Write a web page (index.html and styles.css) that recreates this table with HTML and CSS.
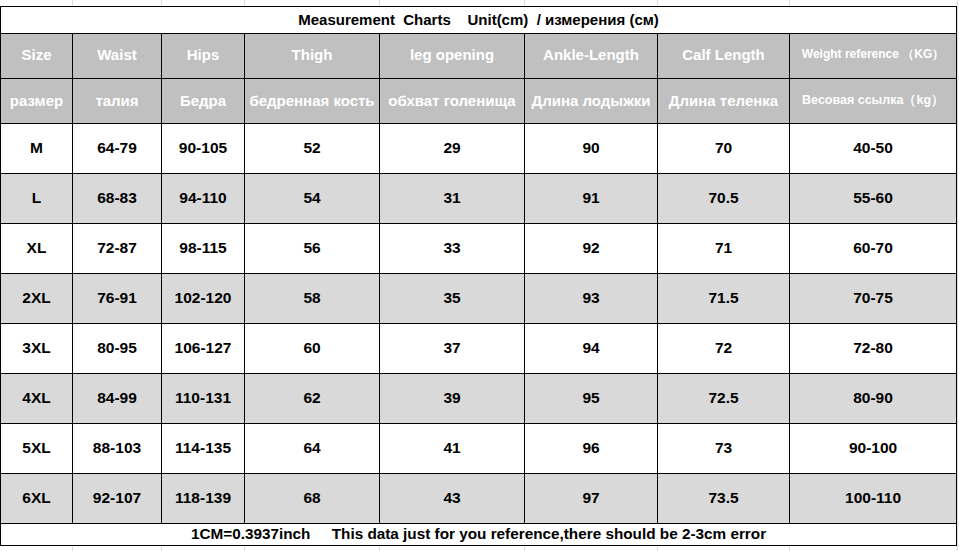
FILE: index.html
```html
<!DOCTYPE html>
<html lang="en">
<head>
<meta charset="utf-8">
<title>Measurement Charts</title>
<link rel="stylesheet" href="styles.css">
</head>
<body>
<div class="sheet">
<table class="chart">
  <colgroup>
    <col class="c1"><col class="c2"><col class="c3"><col class="c4"><col class="c5"><col class="c6"><col class="c7"><col class="c8">
  </colgroup>
  <tr class="title"><td colspan="8">Measurement  Charts    Unit(cm)  / измерения (см)</td></tr>
  <tr class="head head1">
    <td>Size</td><td>Waist</td><td>Hips</td><td>Thigh</td><td>leg opening</td><td>Ankle-Length</td><td>Calf Length</td><td class="small">Weight reference （KG）</td>
  </tr>
  <tr class="head head2">
    <td>размер</td><td>талия</td><td>Бедра</td><td>бедренная кость</td><td>обхват голенища</td><td>Длина лодыжки</td><td>Длина теленка</td><td class="smaller">Весовая ссылка（kg）</td>
  </tr>
  <tr class="row"><td>M</td><td>64-79</td><td>90-105</td><td>52</td><td>29</td><td>90</td><td>70</td><td>40-50</td></tr>
  <tr class="row alt"><td>L</td><td>68-83</td><td>94-110</td><td>54</td><td>31</td><td>91</td><td>70.5</td><td>55-60</td></tr>
  <tr class="row"><td>XL</td><td>72-87</td><td>98-115</td><td>56</td><td>33</td><td>92</td><td>71</td><td>60-70</td></tr>
  <tr class="row alt"><td>2XL</td><td>76-91</td><td>102-120</td><td>58</td><td>35</td><td>93</td><td>71.5</td><td>70-75</td></tr>
  <tr class="row"><td>3XL</td><td>80-95</td><td>106-127</td><td>60</td><td>37</td><td>94</td><td>72</td><td>72-80</td></tr>
  <tr class="row alt"><td>4XL</td><td>84-99</td><td>110-131</td><td>62</td><td>39</td><td>95</td><td>72.5</td><td>80-90</td></tr>
  <tr class="row"><td>5XL</td><td>88-103</td><td>114-135</td><td>64</td><td>41</td><td>96</td><td>73</td><td>90-100</td></tr>
  <tr class="row alt"><td>6XL</td><td>92-107</td><td>118-139</td><td>68</td><td>43</td><td>97</td><td>73.5</td><td>100-110</td></tr>
  <tr class="foot"><td colspan="8">1CM=0.3937inch     This data just for you reference,there should be 2-3cm error</td></tr>
</table>
</div>
</body>
</html>
```

FILE: styles.css
```css
html, body {
  margin: 0;
  padding: 0;
}
body {
  width: 959px;
  height: 551px;
  overflow: hidden;
  background-color: #fff;
  background-image:
    linear-gradient(#dedede, #dedede),
    linear-gradient(#dedede, #dedede),
    linear-gradient(#dedede, #dedede),
    linear-gradient(#dedede, #dedede),
    linear-gradient(#dedede, #dedede),
    linear-gradient(#dedede, #dedede),
    linear-gradient(#dedede, #dedede),
    linear-gradient(#dedede, #dedede),
    linear-gradient(#dedede, #dedede),
    linear-gradient(#dedede, #dedede),
    linear-gradient(#dedede, #dedede),
    linear-gradient(#dedede, #dedede);
  background-repeat: no-repeat;
  background-size: 1px 100%, 1px 100%, 1px 100%, 1px 100%, 1px 100%, 1px 100%, 1px 100%, 1px 100%,
    100% 1px, 100% 1px, 100% 1px, 100% 1px;
  background-position: 72px 0, 161px 0, 244px 0, 379px 0, 524px 0, 657px 0, 789px 0, 957px 0,
    0 33px, 0 78px, 0 523px, 0 545px;
  font-family: "Liberation Sans", Arial, sans-serif;
}
.sheet {
  padding-top: 6px;
}
.chart {
  border-collapse: collapse;
  table-layout: fixed;
  width: 956px;
  background: #fff;
}
.c1 { width: 72px; }
.c2 { width: 89px; }
.c3 { width: 83px; }
.c4 { width: 135px; }
.c5 { width: 145px; }
.c6 { width: 133px; }
.c7 { width: 132px; }
.c8 { width: 167px; }
.chart td {
  border: 1px solid #000;
  padding: 0;
  text-align: center;
  vertical-align: middle;
  font-weight: bold;
  color: #000;
  white-space: pre;
  overflow: hidden;
}
.title td {
  height: 25px;
  padding-bottom: 1px;
  font-size: 15px;
  line-height: 24px;
  background: #fff;
}
.head td {
  font-size: 15px;
  background: #c0c0c0;
  color: #fff;
}
.head1 td {
  height: 41px;
  padding-bottom: 3px;
}
.head2 td {
  height: 42px;
  padding-bottom: 2px;
}
.head td.small { font-size: 12px; }
.head td.smaller { font-size: 12.5px; }
.row td {
  height: 47px;
  padding-bottom: 2px;
  font-size: 15.5px;
  background: #fff;
}
.row.alt td { background: #d9d9d9; }
.foot td {
  height: 19px;
  padding-bottom: 2px;
  font-size: 15.3px;
  line-height: 19px;
  background: #fff;
}
```
